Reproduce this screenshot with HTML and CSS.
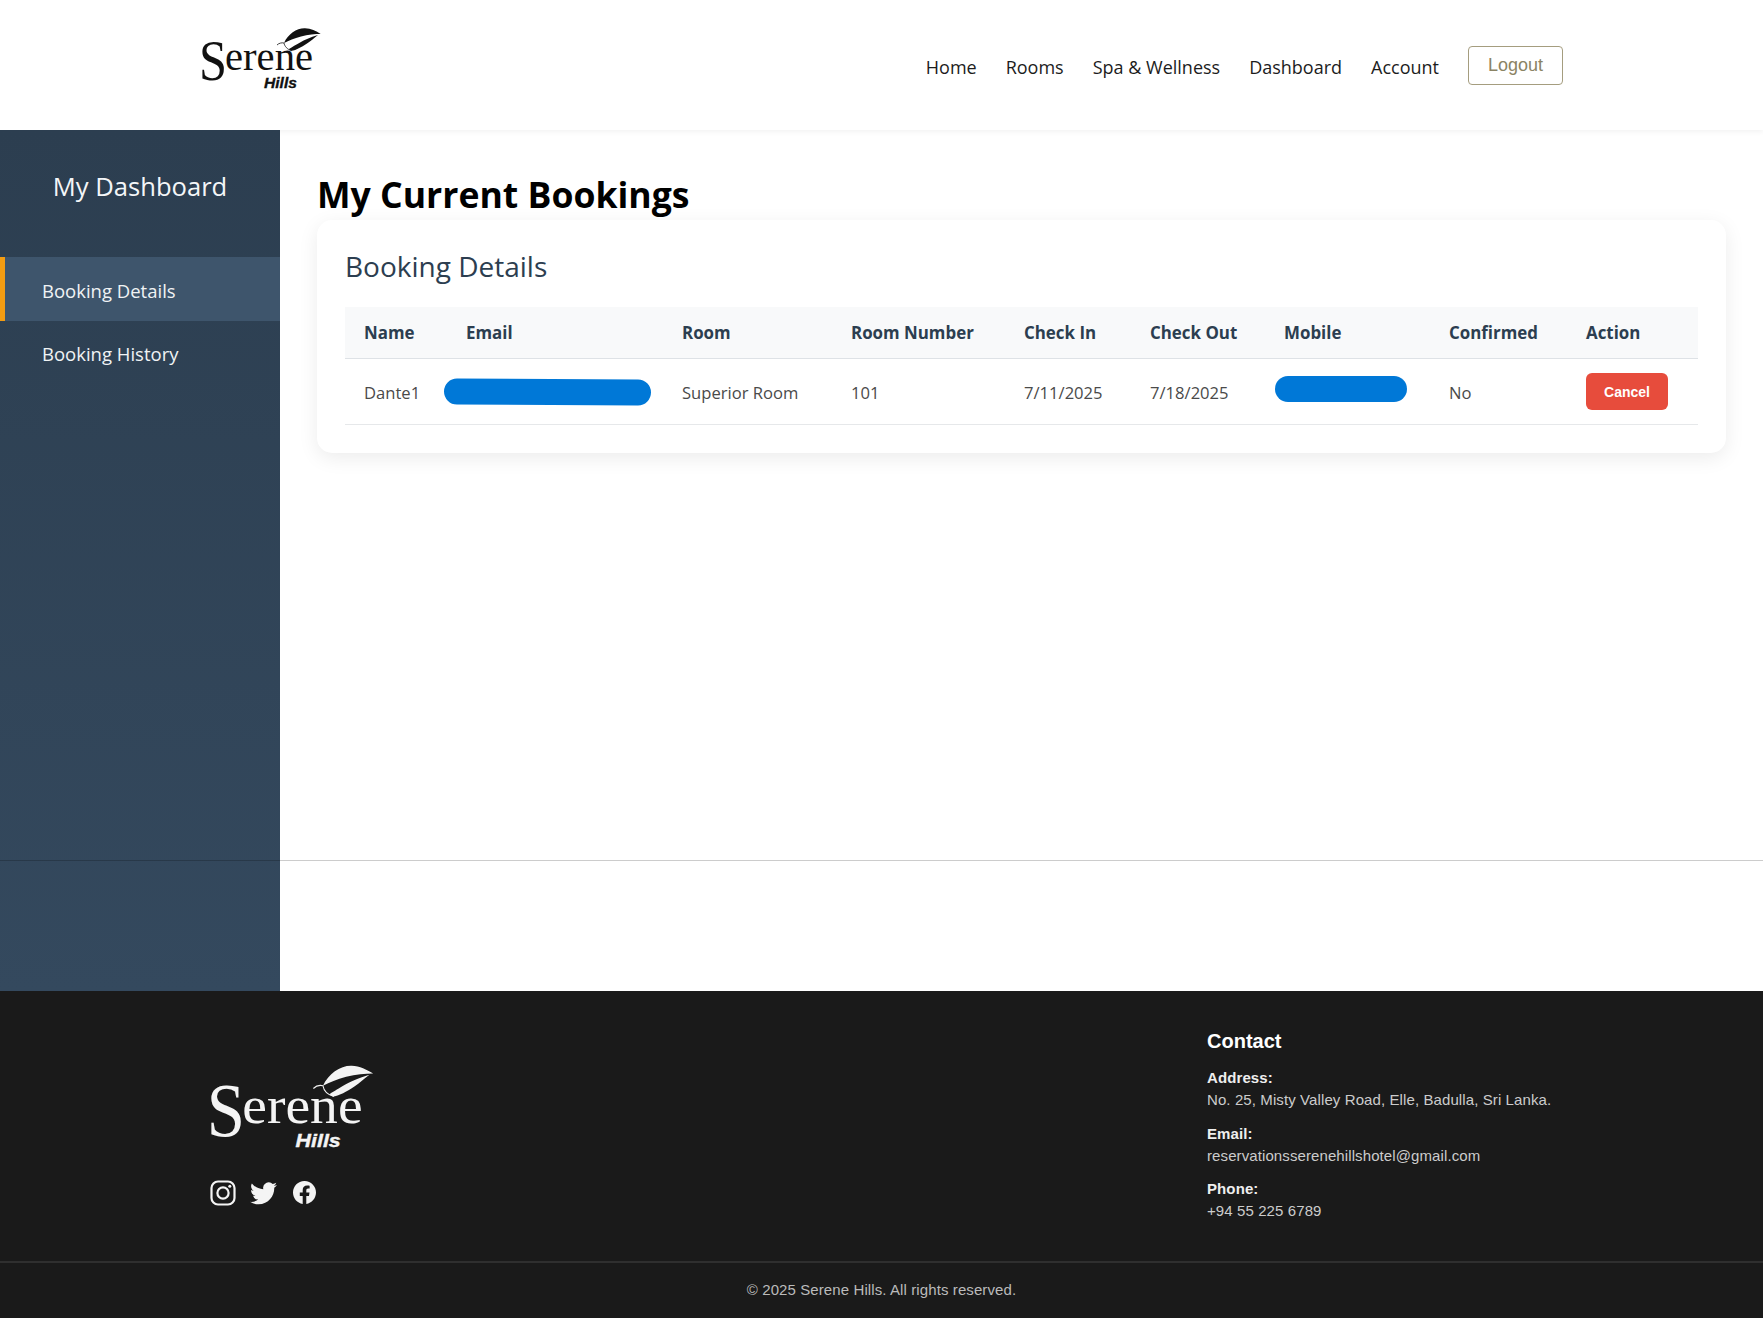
FILE: index.html
```html
<!DOCTYPE html>
<html lang="en">
<head>
    <meta charset="UTF-8">
    <meta name="viewport" content="width=device-width, initial-scale=1.0">
    <title>My Current Bookings - Serene Hills</title>
    <link rel="stylesheet" href="styles.css">
</head>
<body>
    <header class="site-header">
        <a class="brand" href="#">
            <svg class="logo logo-small" viewBox="-3 0 128 70" role="img" aria-label="Serene Hills">
                <path class="leaf-line" d="M77 20 C79 18 82 17.5 84 18 C84.5 21 87 24.5 92 25.8"/>
                <path class="leaf" d="M84 18 C88 9 97 3 105 3.3 C111 3.6 116 6 120.7 9 C115 9 108 9.5 101 11.5 C94 13.5 89 15.5 84 18Z"/>
                <path class="leaf" d="M89 24 C96 20 102 15 118 10 C114 13 111 16 107 18.5 C101 22.5 96 25 92 25.8 C90 25.6 89.5 25 89 24Z"/>
                <text class="logo-serene"><tspan class="logo-s" x="-1" y="55" textLength="28" lengthAdjust="spacingAndGlyphs">S</tspan><tspan class="logo-erene" x="25" y="45" textLength="88" lengthAdjust="spacingAndGlyphs">erene</tspan></text>
                <text class="logo-hills" x="64" y="62.5" textLength="33" lengthAdjust="spacingAndGlyphs">Hills</text>
            </svg>
        </a>
        <nav class="main-nav">
            <a href="#">Home</a>
            <a href="#">Rooms</a>
            <a href="#">Spa &amp; Wellness</a>
            <a href="#">Dashboard</a>
            <a href="#">Account</a>
            <button class="logout-button">Logout</button>
        </nav>
    </header>

    <div class="layout">
        <aside class="sidebar">
            <h2 class="sidebar-title">My Dashboard</h2>
            <ul class="sidebar-menu">
                <li class="active">Booking Details</li>
                <li>Booking History</li>
            </ul>
        </aside>

        <main class="content">
            <h1 class="page-title">My Current Bookings</h1>
            <section class="card">
                <h3 class="card-title">Booking Details</h3>
                <table class="bookings">
                    <colgroup>
                        <col class="col-name"><col class="col-email"><col class="col-room"><col class="col-number"><col class="col-in"><col class="col-out"><col class="col-mobile"><col class="col-confirmed"><col class="col-action">
                    </colgroup>
                    <thead>
                        <tr>
                            <th>Name</th>
                            <th>Email</th>
                            <th>Room</th>
                            <th>Room Number</th>
                            <th>Check In</th>
                            <th>Check Out</th>
                            <th>Mobile</th>
                            <th>Confirmed</th>
                            <th>Action</th>
                        </tr>
                    </thead>
                    <tbody>
                        <tr>
                            <td>Dante1</td>
                            <td class="redacted-cell"><span class="scribble scribble-email"></span></td>
                            <td>Superior Room</td>
                            <td>101</td>
                            <td>7/11/2025</td>
                            <td>7/18/2025</td>
                            <td class="redacted-cell"><span class="scribble scribble-mobile"></span></td>
                            <td>No</td>
                            <td><button class="cancel-button">Cancel</button></td>
                        </tr>
                    </tbody>
                </table>
            </section>
        </main>
        <hr class="page-rule">
    </div>

    <footer class="site-footer">
        <div class="footer-top">
            <div class="footer-brand">
                <svg class="logo logo-large" viewBox="-3 0 128 70" role="img" aria-label="Serene Hills">
                    <path class="leaf-line" d="M77 20 C79 18 82 17.5 84 18 C84.5 21 87 24.5 92 25.8"/>
                    <path class="leaf" d="M84 18 C88 9 97 3 105 3.3 C111 3.6 116 6 120.7 9 C115 9 108 9.5 101 11.5 C94 13.5 89 15.5 84 18Z"/>
                    <path class="leaf" d="M89 24 C96 20 102 15 118 10 C114 13 111 16 107 18.5 C101 22.5 96 25 92 25.8 C90 25.6 89.5 25 89 24Z"/>
                    <text class="logo-serene"><tspan class="logo-s" x="-1" y="55" textLength="28" lengthAdjust="spacingAndGlyphs">S</tspan><tspan class="logo-erene" x="25" y="45" textLength="88" lengthAdjust="spacingAndGlyphs">erene</tspan></text>
                    <text class="logo-hills" x="64" y="62.5" textLength="33" lengthAdjust="spacingAndGlyphs">Hills</text>
                </svg>
                <div class="social">
                    <svg class="icon-instagram" viewBox="0 0 26 26" aria-label="Instagram">
                        <rect x="1.5" y="1.5" width="23" height="23" rx="6.5"/>
                        <circle cx="13" cy="13" r="5.6"/>
                        <circle class="dot" cx="19.8" cy="6.2" r="1.5"/>
                    </svg>
                    <svg class="icon-twitter" viewBox="0 0 16 16" aria-label="Twitter">
                        <path d="M5.026 15c6.038 0 9.341-5.003 9.341-9.334 0-.14 0-.282-.006-.422A6.685 6.685 0 0 0 16 3.542a6.658 6.658 0 0 1-1.889.518 3.301 3.301 0 0 0 1.447-1.817 6.533 6.533 0 0 1-2.087.793A3.286 3.286 0 0 0 7.875 6.03a9.325 9.325 0 0 1-6.767-3.429 3.289 3.289 0 0 0 1.018 4.382A3.323 3.323 0 0 1 .64 6.575v.045a3.288 3.288 0 0 0 2.632 3.218 3.203 3.203 0 0 1-.865.115 3.23 3.23 0 0 1-.614-.057 3.283 3.283 0 0 0 3.067 2.277A6.588 6.588 0 0 1 .78 13.58a6.32 6.32 0 0 1-.78-.045A9.344 9.344 0 0 0 5.026 15z"/>
                    </svg>
                    <svg class="icon-facebook" viewBox="0 0 16 16" aria-label="Facebook">
                        <path d="M16 8.049c0-4.446-3.582-8.05-8-8.05C3.58 0-.002 3.603-.002 8.05c0 4.017 2.926 7.347 6.75 7.95v-5.625h-2.03V8.05H6.75V6.275c0-2.017 1.195-3.131 3.022-3.131.876 0 1.791.157 1.791.157v1.98h-1.009c-.993 0-1.303.621-1.303 1.258v1.51h2.218l-.354 2.326H9.25V16c3.824-.604 6.75-3.934 6.75-7.951z"/>
                    </svg>
                </div>
            </div>
            <div class="footer-contact">
                <h4>Contact</h4>
                <p><strong>Address:</strong><br>No. 25, Misty Valley Road, Elle, Badulla, Sri Lanka.</p>
                <p><strong>Email:</strong><br>reservationsserenehillshotel@gmail.com</p>
                <p><strong>Phone:</strong><br>+94 55 225 6789</p>
            </div>
        </div>
        <p class="footer-copy">© 2025 Serene Hills. All rights reserved.</p>
    </footer>
</body>
</html>
```

FILE: styles.css
```css
*{
    box-sizing: border-box;
}
body{
    margin: 0;
    background-color: #fff;
    font-family: "Open Sans", "Noto Sans", sans-serif;
    color: #2c3e50;
}

/* header */
.site-header{
    height: 130px;
    padding: 0 200px 0 197px;
    display: flex;
    justify-content: space-between;
    background: #fff;
    box-shadow: 0 2px 5px rgba(0, 0, 0, 0.05);
    position: relative;
}
.brand{
    display: block;
    padding-top: 25px;
}
.logo{
    display: block;
    color: #111;
}
.logo-small{
    width: 128px;
    height: 70px;
}
.logo-large{
    width: 175px;
    height: 96px;
    color: #f4f4f4;
}
.logo text{
    fill: currentColor;
}
.logo-serene{
    font-family: "Liberation Serif", serif;
}
.logo-s{
    font-size: 56px;
}
.logo-erene{
    font-size: 39px;
}
.logo-hills{
    font-family: "Liberation Sans", sans-serif;
    font-size: 14px;
    font-weight: bold;
    font-style: italic;
    stroke: currentColor;
    stroke-width: 0.3;
}
.leaf{
    fill: currentColor;
}
.leaf-line{
    fill: none;
    stroke: currentColor;
    stroke-width: 0.8;
}
.main-nav{
    display: flex;
    align-items: center;
    gap: 29px;
    padding-bottom: 1px;
}
.main-nav a{
    color: #1c1c1c;
    text-decoration: none;
    font-size: 18px;
    padding-top: 4px;
}
.logout-button{
    width: 95px;
    height: 39px;
    margin-top: 2px;
    background: #fff;
    border: 1px solid #a59d7f;
    border-radius: 4px;
    color: #8b8364;
    font-family: "Liberation Sans", sans-serif;
    font-size: 18px;
}

/* layout */
.layout{
    position: relative;
    display: flex;
    min-height: 861px;
}
.page-rule{
    position: absolute;
    top: 730px;
    left: 0;
    right: 0;
    margin: 0;
    border: none;
    height: 1px;
    background: rgba(0, 0, 0, 0.2);
}
.sidebar{
    width: 280px;
    flex-shrink: 0;
    background: linear-gradient(180deg, #2c3e50, #34495e);
    color: #fff;
}
.sidebar-title{
    margin: 0;
    padding-top: 39px;
    height: 127px;
    text-align: center;
    font-size: 25.6px;
    font-weight: 400;
    color: #f4f6f8;
}
.sidebar-menu{
    list-style: none;
    margin: 0;
    padding: 0;
}
.sidebar-menu li{
    height: 63px;
    padding: 2px 0 0 42px;
    display: flex;
    align-items: center;
    font-size: 18.5px;
    color: #f0f3f5;
}
.sidebar-menu .active{
    height: 64px;
    background: #3e556c;
    border-left: 5px solid #f39c12;
    padding-left: 37px;
}

/* main */
.content{
    flex: 1;
    padding: 35px 37px 0 37px;
}
.page-title{
    margin: 0;
    height: 55px;
    font-size: 35.6px;
    line-height: 58px;
    font-weight: 700;
    color: #000;
}
.card{
    background: #fff;
    border-radius: 15px;
    padding: 28px 28px 28px 28px;
    height: 233px;
    box-shadow: 0 5px 20px rgba(0, 0, 0, 0.08);
}
.card-title{
    margin: 0 0 21px 0;
    height: 38px;
    font-size: 28px;
    line-height: 36px;
    font-weight: 400;
    color: #2c3e50;
}
.bookings{
    width: 100%;
    table-layout: fixed;
    border-collapse: collapse;
    font-size: 16.6px;
}
.col-name{ width: 102px; }
.col-email{ width: 216px; }
.col-room{ width: 169px; }
.col-number{ width: 173px; }
.col-in{ width: 126px; }
.col-out{ width: 134px; }
.col-mobile{ width: 165px; }
.col-confirmed{ width: 137px; }
.bookings th{
    height: 51px;
    padding: 0 0 0 19px;
    background: #f8f9fa;
    border-bottom: 1px solid #dee2e6;
    text-align: left;
    font-size: 16.9px;
    font-weight: 700;
    color: #2c3e50;
}
.bookings td{
    height: 66px;
    padding: 2px 0 0 19px;
    border-bottom: 1px solid #e6e8ea;
    color: #4a4a4a;
}
.redacted-cell{
    position: relative;
}
.scribble{
    position: absolute;
    background: #0078d7;
    height: 26px;
    border-radius: 13px;
}
.scribble-email{
    left: -3px;
    top: 20px;
    width: 207px;
    transform: rotate(0.3deg);
}
.scribble-mobile{
    left: 10px;
    top: 17px;
    width: 132px;
}
.cancel-button{
    display: block;
    width: 82px;
    height: 37px;
    background: #e74c3c;
    border: none;
    border-radius: 6px;
    color: #fff;
    font-family: "Liberation Sans", sans-serif;
    font-size: 14px;
    font-weight: bold;
    margin-top: -1px;
}

/* footer */
.site-footer{
    background: #1a1a1a;
    color: #ccc;
    font-family: "Liberation Sans", Arial, sans-serif;
    height: 327px;
}
.footer-top{
    height: 272px;
    padding-left: 204px;
    display: flex;
    justify-content: space-between;
    border-bottom: 2px solid #2f2f2f;
}
.footer-brand{
    padding-top: 70px;
}
.social{
    margin: 22px 0 0 6px;
    display: flex;
    align-items: center;
    gap: 14px;
    color: #f4f4f4;
}
.social svg{
    display: block;
    fill: currentColor;
}
.icon-instagram{
    width: 26px;
    height: 26px;
}
.icon-instagram rect,
.icon-instagram circle{
    fill: none;
    stroke: currentColor;
    stroke-width: 2.2;
}
.icon-instagram .dot{
    fill: currentColor;
    stroke: none;
}
.icon-twitter{
    width: 27px;
    height: 27px;
}
.icon-facebook{
    width: 23px;
    height: 23px;
    margin-left: 2px;
}
.footer-contact{
    width: 556px;
    padding-top: 38px;
}
.footer-contact h4{
    margin: 0 0 14px 0;
    font-size: 20px;
    line-height: 24px;
    color: #fff;
}
.footer-contact p{
    margin: 0 0 11.6px 0;
    font-size: 15px;
    line-height: 22px;
    letter-spacing: 0.1px;
}
.footer-contact strong{
    color: #eee;
}
.footer-copy{
    margin: 0;
    padding-top: 18px;
    text-align: center;
    font-size: 15px;
    letter-spacing: 0.1px;
    color: #bbb;
}
```
